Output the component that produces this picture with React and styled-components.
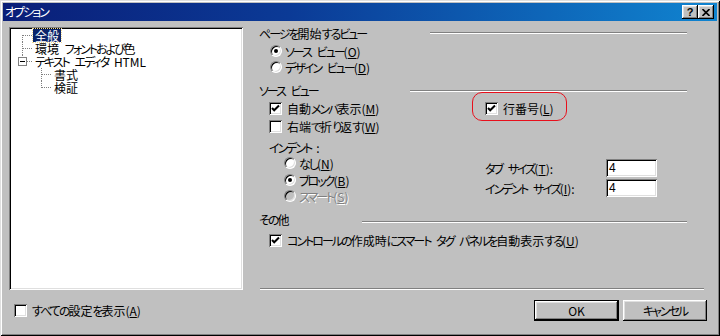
import React from "react";
import styled, { createGlobalStyle } from "styled-components";

const Global = createGlobalStyle`
  html, body { margin: 0; padding: 0; background: #c0c0c0; }
  body {
    font-family: "Noto Sans CJK JP", "Liberation Sans", sans-serif;
    font-size: 12px;
    color: #000;
  }
  * { box-sizing: border-box; }
`;

const Window = styled.div`
  width: 720px;
  height: 336px;
  background: #c0c0c0;
  padding: 3px;
  display: flex;
  flex-direction: column;
  font-feature-settings: "palt";
  word-spacing: 3px;
  box-shadow: inset 1px 1px #dfdfdf, inset -1px -1px #000,
    inset 2px 2px #fff, inset -2px -2px #808080;
`;

const TitleBar = styled.div`
  height: 18px;
  flex: none;
  display: flex;
  align-items: center;
  justify-content: space-between;
  padding: 0 3px 0 2px;
  background: linear-gradient(90deg, #0a1e78 0%, #0b3a96 40%, #1084d0 100%);
`;

const TitleText = styled.span`
  color: #fff;
  font-size: 12px;
  line-height: 18px;
`;

const TitleButtons = styled.div`
  display: flex;
`;

const CaptionButton = styled.span`
  width: 16px;
  height: 14px;
  background: #c0c0c0;
  display: flex;
  align-items: center;
  justify-content: center;
  font-family: "Liberation Sans", sans-serif;
  font-weight: bold;
  font-size: 11px;
  line-height: 1;
  box-shadow: inset -1px -1px #000, inset 1px 1px #fff,
    inset -2px -2px #808080, inset 2px 2px #dfdfdf;
`;

const Body = styled.div`
  flex: 1;
  display: flex;
  flex-direction: column;
  padding: 4px 10px 0 6px;
`;

const Main = styled.div`
  height: 266px;
  display: flex;
  flex: none;
`;

const Tree = styled.div`
  width: 234px;
  height: 263px;
  margin-top: 2px;
  background: #fff;
  padding: 2px 0 0 7px;
  flex: none;
  box-shadow: inset 1px 1px #808080, inset -1px -1px #fff,
    inset 2px 2px #000, inset -2px -2px #dfdfdf;
`;

const TreeRow = styled.div`
  height: 13px;
  display: flex;
  align-items: stretch;
  padding-left: ${(p) => p.$level * 19}px;
`;

const Connector = styled.svg`
  width: 17px;
  height: 13px;
  flex: none;
  display: block;
  shape-rendering: crispEdges;
`;

const TreeLabel = styled.span`
  line-height: 13px;
  padding: 0 2px;
  white-space: nowrap;
  background: ${(p) => (p.$selected ? "#0a246a" : "transparent")};
  color: ${(p) => (p.$selected ? "#fff" : "#000")};
  outline: ${(p) => (p.$selected ? "1px dotted #f0d890" : "none")};
`;

const Kana = styled.span`
  letter-spacing: -2px;
`;

const Pane = styled.div`
  flex: 1;
  margin-left: 16px;
  display: flex;
  flex-direction: column;
`;

const GroupHead = styled.div`
  display: flex;
  align-items: center;
  height: 16px;
  margin-top: ${(p) => p.$mt || 0}px;
`;

const HeadLabel = styled.span`
  width: ${(p) => p.$w}px;
  flex: none;
  white-space: nowrap;
`;

const Etched = styled.span`
  flex: 1;
  height: 2px;
  margin-right: 20px;
  margin-top: ${(p) => p.$dy || 0}px;
  border-top: 1px solid #808080;
  border-bottom: 1px solid #fff;
`;

const Option = styled.label`
  position: relative;
  display: flex;
  align-items: center;
  gap: ${(p) => (p.$gap != null ? p.$gap : 5)}px;
  height: 16px;
  margin-top: ${(p) => p.$mt || 0}px;
  padding-left: ${(p) => p.$indent || 0}px;
  white-space: nowrap;
  color: ${(p) => (p.$disabled ? "#808080" : "#000")};
  text-shadow: ${(p) => (p.$disabled ? "1px 1px 0 #fff" : "none")};
`;

const Box = styled.span`
  width: 13px;
  height: 13px;
  flex: none;
  background: #fff;
  display: flex;
  align-items: center;
  justify-content: center;
  box-shadow: inset 1px 1px #808080, inset -1px -1px #fff,
    inset 2px 2px #000, inset -2px -2px #dfdfdf;
`;

const RadioDot = styled.span`
  width: 12px;
  height: 12px;
  flex: none;
  border-radius: 50%;
  border: 1px solid;
  border-color: #808080 #fff #fff #808080;
  background: ${(p) => (p.$disabled ? "#c0c0c0" : "#fff")};
  box-shadow: inset 1px 1px 0 #000, inset -1px -1px 0 #dfdfdf;
  display: flex;
  align-items: center;
  justify-content: center;
  &::after {
    content: "";
    width: 4px;
    height: 4px;
    border-radius: 50%;
    background: ${(p) => (p.$checked ? "#000" : "transparent")};
  }
`;

const Annotation = styled.span`
  position: absolute;
  left: -13px;
  top: -8px;
  width: 95px;
  height: 29px;
  border: 1.5px solid #e8101c;
  border-radius: 10px;
  pointer-events: none;
`;

const TwoCol = styled.div`
  display: grid;
  grid-template-columns: 216px 1fr;
  padding-left: 10px;
  margin-top: ${(p) => p.$mt || 0}px;
`;

const Col = styled.div`
  display: flex;
  flex-direction: column;
  margin-top: ${(p) => p.$mt || 0}px;
  gap: ${(p) => p.$gap || 0}px;
`;

const FieldRow = styled.div`
  display: flex;
  align-items: center;
  height: 18px;
`;

const FieldLabel = styled.span`
  width: 121px;
  white-space: nowrap;
`;

const NumInput = styled.span`
  width: 51px;
  height: 18px;
  background: #fff;
  padding: 0 0 0 3px;
  line-height: 18px;
  font-family: "Liberation Sans", sans-serif;
  box-shadow: inset 1px 1px #808080, inset -1px -1px #fff,
    inset 2px 2px #000, inset -2px -2px #dfdfdf;
`;

const Separator = styled.div`
  margin: auto 3px 1px 1px;
  height: 2px;
  border-top: 1px solid #808080;
  border-bottom: 1px solid #fff;
`;

const Footer = styled.div`
  display: flex;
  align-items: center;
  padding: 9px 0 0 5px;
  height: 30px;
`;

const Buttons = styled.div`
  margin-left: auto;
  display: flex;
  gap: 4px;
`;

const PushButton = styled.button`
  width: ${(p) => p.$w}px;
  height: 21px;
  padding: 0;
  font: inherit;
  font-size: 12px;
  color: #000;
  background: #c0c0c0;
  border: ${(p) => (p.$default ? "1px solid #000" : "none")};
  box-shadow: inset -1px -1px #000, inset 1px 1px #fff,
    inset -2px -2px #808080, inset 2px 2px #dfdfdf;
`;

const Mn = styled.u`
  text-decoration-thickness: 1px;
  text-underline-offset: 1px;
`;

const KANA_RUN = /([\u3040-\u30ff\uff66-\uff9f]+)/;

function J({ t }) {
  return t
    .split(KANA_RUN)
    .map((s, i) => (i % 2 ? <Kana key={i}>{s}</Kana> : s));
}

function Check({ checked }) {
  return (
    <Box>
      {checked && (
        <svg width="9" height="9" viewBox="0 0 9 9">
          <path d="M1 4 L3.2 6.3 L8 1.5" fill="none" stroke="#000" strokeWidth="2" />
        </svg>
      )}
    </Box>
  );
}

function TreeLines({ type }) {
  const c = "#808080";
  const dash = "1 1";
  return (
    <Connector viewBox="0 0 17 13">
      {type === "first" && (
        <>
          <line x1="6.5" y1="6" x2="6.5" y2="13" stroke={c} strokeDasharray={dash} />
          <line x1="7" y1="6.5" x2="17" y2="6.5" stroke={c} strokeDasharray={dash} />
        </>
      )}
      {type === "tee" && (
        <>
          <line x1="6.5" y1="0" x2="6.5" y2="13" stroke={c} strokeDasharray={dash} />
          <line x1="7" y1="6.5" x2="17" y2="6.5" stroke={c} strokeDasharray={dash} />
        </>
      )}
      {type === "last" && (
        <>
          <line x1="6.5" y1="0" x2="6.5" y2="7" stroke={c} strokeDasharray={dash} />
          <line x1="7" y1="6.5" x2="17" y2="6.5" stroke={c} strokeDasharray={dash} />
        </>
      )}
      {type === "expanded" && (
        <>
          <line x1="6.5" y1="0" x2="6.5" y2="2" stroke={c} strokeDasharray={dash} />
          <rect x="2.5" y="2.5" width="8" height="8" fill="#fff" stroke={c} />
          <line x1="4" y1="6.5" x2="9" y2="6.5" stroke="#000" />
          <line x1="11" y1="6.5" x2="17" y2="6.5" stroke={c} strokeDasharray={dash} />
        </>
      )}
    </Connector>
  );
}

const treeItems = [
  { level: 0, type: "first", label: "全般", selected: true },
  { level: 0, type: "tee", label: "環境 フォントおよび色" },
  { level: 0, type: "expanded", label: "テキスト エディタ HTML" },
  { level: 1, type: "tee", label: "書式" },
  { level: 1, type: "last", label: "検証" },
];

export default function App() {
  return (
    <>
      <Global />
      <Window>
        <TitleBar>
          <TitleText>
            <J t="オプション" />
          </TitleText>
          <TitleButtons>
            <CaptionButton>?</CaptionButton>
            <CaptionButton>
              <svg width="8" height="7" viewBox="0 0 8 7">
                <path d="M0.5 0 L7.5 7 M7.5 0 L0.5 7" stroke="#000" strokeWidth="1.6" />
              </svg>
            </CaptionButton>
          </TitleButtons>
        </TitleBar>
        <Body>
          <Main>
            <Tree>
              {treeItems.map((it) => (
                <TreeRow key={it.label} $level={it.level}>
                  <TreeLines type={it.type} />
                  <TreeLabel $selected={it.selected}>
                    <J t={it.label} />
                  </TreeLabel>
                </TreeRow>
              ))}
            </Tree>
            <Pane>
              <GroupHead>
                <HeadLabel $w={171}>
                  <J t="ページを開始するビュー" />
                </HeadLabel>
                <Etched />
              </GroupHead>
              <Option $mt={2} $indent={11} $gap={3}>
                <RadioDot $checked />
                <span>
                  <J t="ソース ビュー" />(<Mn>O</Mn>)
                </span>
              </Option>
              <Option $indent={11} $gap={3}>
                <RadioDot />
                <span>
                  <J t="デザイン ビュー" />(<Mn>D</Mn>)
                </span>
              </Option>

              <GroupHead $mt={7}>
                <HeadLabel $w={151}>
                  <J t="ソース ビュー" />
                </HeadLabel>
                <Etched $dy={2} />
              </GroupHead>
              <TwoCol $mt={2}>
                <Option>
                  <Check checked />
                  <span>
                    <J t="自動メンバ表示" />(<Mn>M</Mn>)
                  </span>
                </Option>
                <Option>
                  <Check checked />
                  <span>
                    行番号(<Mn>L</Mn>)
                  </span>
                  <Annotation />
                </Option>
                <Option $mt={2}>
                  <Check />
                  <span>
                    <J t="右端で折り返す" />(<Mn>W</Mn>)
                  </span>
                </Option>
              </TwoCol>

              <TwoCol $mt={5}>
                <Col>
                  <Option>
                    <J t="インデント:" />
                  </Option>
                  <Option $indent={15} $gap={3}>
                    <RadioDot />
                    <span>
                      <J t="なし" />(<Mn>N</Mn>)
                    </span>
                  </Option>
                  <Option $indent={15} $gap={3} $mt={1}>
                    <RadioDot $checked />
                    <span>
                      <J t="ブロック" />(<Mn>B</Mn>)
                    </span>
                  </Option>
                  <Option $indent={15} $gap={3} $disabled>
                    <RadioDot $disabled />
                    <span>
                      <J t="スマート" />(<Mn>S</Mn>)
                    </span>
                  </Option>
                </Col>
                <Col $mt={20} $gap={2}>
                  <FieldRow>
                    <FieldLabel>
                      <J t="タブ サイズ" />(<Mn>T</Mn>):
                    </FieldLabel>
                    <NumInput>4</NumInput>
                  </FieldRow>
                  <FieldRow>
                    <FieldLabel>
                      <J t="インデント サイズ" />(<Mn>I</Mn>):
                    </FieldLabel>
                    <NumInput>4</NumInput>
                  </FieldRow>
                </Col>
              </TwoCol>

              <GroupHead $mt={7}>
                <HeadLabel $w={103}>
                  <J t="その他" />
                </HeadLabel>
                <Etched $dy={6} />
              </GroupHead>
              <TwoCol $mt={5}>
                <Option>
                  <Check checked />
                  <span>
                    <J t="コントロールの作成時にスマート タグ パネルを自動表示する" />(
                    <Mn>U</Mn>)
                  </span>
                </Option>
              </TwoCol>
              <Separator />
            </Pane>
          </Main>
          <Footer>
            <Option>
              <Check />
              <span>
                <J t="すべての設定を表示" />(<Mn>A</Mn>)
              </span>
            </Option>
            <Buttons>
              <PushButton $w={85} $default>
                OK
              </PushButton>
              <PushButton $w={84}>
                <J t="キャンセル" />
              </PushButton>
            </Buttons>
          </Footer>
        </Body>
      </Window>
    </>
  );
}
